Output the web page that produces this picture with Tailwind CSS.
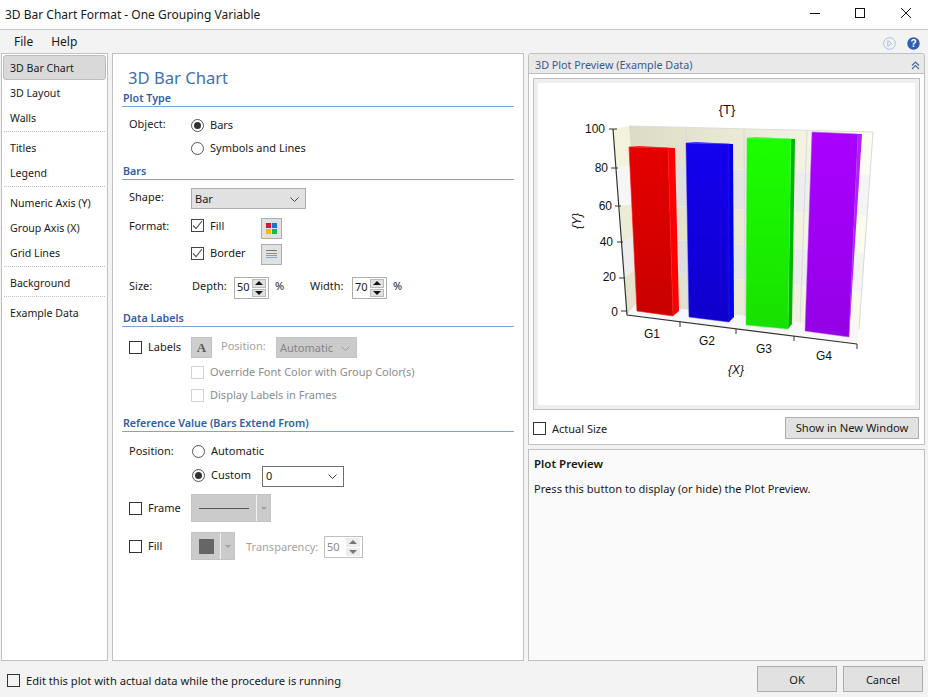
<!DOCTYPE html>
<html lang="en">
  <head>
    <meta charset="UTF-8" />
    <title>3D Bar Chart Format</title>
    <script src="https://cdn.jsdelivr.net/npm/@tailwindcss/browser@4"></script>
  </head>
  <body class="w-[930px] h-[697px] overflow-hidden bg-white font-['Noto_Sans',sans-serif] text-[11px] text-[#1a1a1a]">
    <div class="w-[928px] h-[697px] flex flex-col bg-[#f3f3f3]">
      <!-- title bar -->
      <div class="h-[30px] shrink-0 bg-white border-b border-[#c8c8c8] flex items-center pl-[5px] text-[12px]">
        <span class="flex-1">3D Bar Chart Format - One Grouping Variable</span>
        <svg class="w-[120px] h-[29px]" viewBox="808 0 120 29" fill="none" stroke="#111" stroke-width="1">
          <path d="M810 13.5h10" />
          <rect x="855.5" y="8.5" width="9" height="9" />
          <path d="M901 8l10 10M911 8l-10 10" />
        </svg>
      </div>

      <!-- menu -->
      <div class="h-[23px] shrink-0 flex items-center pl-[14px] pr-[8px] gap-[18px] text-[12px]">
        <span>File</span>
        <span>Help</span>
        <div class="flex-1"></div>
        <svg class="w-[13px] h-[13px] translate-y-[2px]" viewBox="0 0 13 13" fill="none" stroke="#a9c1e4" stroke-width="1">
          <circle cx="6.5" cy="6.5" r="5.8" />
          <path d="M4.8 3.6l4 2.9-4 2.9z" />
        </svg>
        <svg class="w-[13px] h-[13px] ml-[-7px] translate-y-[2px]" viewBox="0 0 13 13">
          <circle cx="6.5" cy="6.5" r="6.2" fill="#2f5fb0" />
          <text x="6.5" y="10" text-anchor="middle" font-size="10" font-weight="700" fill="#fff" font-family="Liberation Sans">?</text>
        </svg>
      </div>

      <div class="flex-1 flex pl-[1px] pr-[3px] gap-[4px] min-h-0">
        <!-- sidebar -->
        <div class="w-[107px] bg-white border border-[#c0c0c0] p-[1px] flex flex-col text-[10.6px]">
          <div class="h-[25px] shrink-0 flex items-center pl-[6px] pt-[2px] bg-[#d9d9d9] border border-[#bdbdbd] rounded-[3px]">3D Bar Chart</div>
          <div class="h-[25px] shrink-0 flex items-center pl-[7px] pt-[2px]">3D Layout</div>
          <div class="h-[25px] shrink-0 flex items-center pl-[7px] pt-[2px]">Walls</div>
          <div class="h-[5px] shrink-0 mx-[1px] border-t border-dotted border-[#c0c0c0] translate-y-[1px]"></div>
          <div class="h-[25px] shrink-0 flex items-center pl-[7px] pt-[2px]">Titles</div>
          <div class="h-[25px] shrink-0 flex items-center pl-[7px] pt-[2px]">Legend</div>
          <div class="h-[5px] shrink-0 mx-[1px] border-t border-dotted border-[#c0c0c0] translate-y-[1px]"></div>
          <div class="h-[25px] shrink-0 flex items-center pl-[7px] pt-[2px]">Numeric Axis (Y)</div>
          <div class="h-[25px] shrink-0 flex items-center pl-[7px] pt-[2px]">Group Axis (X)</div>
          <div class="h-[25px] shrink-0 flex items-center pl-[7px] pt-[2px]">Grid Lines</div>
          <div class="h-[5px] shrink-0 mx-[1px] border-t border-dotted border-[#c0c0c0] translate-y-[1px]"></div>
          <div class="h-[25px] shrink-0 flex items-center pl-[7px] pt-[2px]">Background</div>
          <div class="h-[5px] shrink-0 mx-[1px] border-t border-dotted border-[#c0c0c0] translate-y-[1px]"></div>
          <div class="h-[25px] shrink-0 flex items-center pl-[7px] pt-[2px]">Example Data</div>
        </div>

        <!-- form -->
        <div class="w-[412px] bg-white border border-[#c0c0c0] px-[9px] flex flex-col">
          <div class="h-[24px] mt-[12px] shrink-0 pl-[6px] flex items-center text-[16.6px] text-[#3f6fb5]">3D Bar Chart</div>

          <div class="h-[17px] shrink-0 pl-[1px] flex items-center border-b border-[#7ea3dc] font-semibold text-[10.7px] text-[#2f5ea8]">Plot Type</div>
          <div class="h-[24px] mt-[6px] shrink-0 pl-[7px] flex items-center">
            <span class="w-[62px] -translate-y-[1px]">Object:</span>
            <span class="w-[13px] h-[13px] rounded-full border border-[#555] flex items-center justify-center"><span class="w-[7px] h-[7px] rounded-full bg-[#333]"></span></span>
            <span class="ml-[6px]">Bars</span>
          </div>
          <div class="h-[22px] mb-[1px] shrink-0 pl-[69px] flex items-center">
            <span class="w-[13px] h-[13px] rounded-full border border-[#555]"></span>
            <span class="ml-[6px]">Symbols and Lines</span>
          </div>

          <div class="h-[17px] mt-[3px] shrink-0 pl-[1px] flex items-center border-b border-[#7ea3dc] font-semibold text-[10.7px] text-[#2f5ea8]">Bars</div>
          <div class="h-[21px] mt-[8px] shrink-0 pl-[7px] flex items-center">
            <span class="w-[62px] -translate-y-[1px]">Shape:</span>
            <div class="w-[115px] h-[21px] pt-[1px] bg-[#e1e1e1] border border-[#adadad] flex items-center pl-[3px] pr-[6px] justify-between">
              <span>Bar</span>
              <svg class="w-[9px] h-[5px]" viewBox="0 0 9 5" fill="none" stroke="#444"><path d="M.5.5l4 4 4-4" /></svg>
            </div>
          </div>
          <div class="h-[21px] mt-[9px] shrink-0 pl-[7px] flex items-start">
            <span class="w-[62px]">Format:</span>
            <span class="w-[13px] h-[13px] mt-[1px] border border-[#444] flex items-center justify-center">
              <svg class="w-[11px] h-[11px]" viewBox="0 0 11 11" fill="none" stroke="#555" stroke-width="1.1"><path d="M1 5.5l3 3.2 6-7.7" /></svg>
            </span>
            <span class="w-[51px] ml-[6px]">Fill</span>
            <span class="w-[21px] h-[21px] bg-[#e1e1e1] border border-[#adadad] flex items-center justify-center">
              <svg class="w-[11px] h-[11px]" viewBox="0 0 11 11">
                <rect width="5" height="5" fill="#e8101c" />
                <rect x="6" width="5" height="5" fill="#0f78d4" />
                <rect y="6" width="5" height="5" fill="#f6b80a" />
                <rect x="6" y="6" width="5" height="5" fill="#12b850" />
              </svg>
            </span>
          </div>
          <div class="h-[21px] mt-[5px] shrink-0 pl-[69px] flex items-start">
            <span class="w-[13px] h-[13px] mt-[3px] border border-[#444] flex items-center justify-center">
              <svg class="w-[11px] h-[11px]" viewBox="0 0 11 11" fill="none" stroke="#555" stroke-width="1.1"><path d="M1 5.5l3 3.2 6-7.7" /></svg>
            </span>
            <span class="w-[51px] ml-[6px] mt-[1px]">Border</span>
            <span class="w-[21px] h-[21px] bg-[#e1e1e1] border border-[#adadad] flex items-center justify-center">
              <svg class="w-[11px] h-[9px]" viewBox="0 0 11 9">
                <rect width="11" height="1" fill="#777" />
                <rect y="3" width="11" height="1" fill="#7f9f7f" />
                <rect y="5" width="11" height="1" fill="#d88080" />
                <rect y="7" width="11" height="1" fill="#80a8d8" />
              </svg>
            </span>
          </div>
          <div class="h-[22px] mt-[12px] shrink-0 pl-[7px] flex items-center">
            <span class="w-[63px] -translate-y-[2px]">Size:</span>
            <span class="w-[42px] -translate-y-[2px]">Depth:</span>
            <div class="w-[35px] h-[22px] border border-[#adadad] flex items-center pl-[2px] bg-white">
              <span class="flex-1 -translate-y-[1px]">50</span>
              <span class="w-[14px] h-[18px] mr-[2px] flex flex-col gap-[1px]">
                <span class="flex-1 bg-[#e1e1e1] border border-[#bbb] flex items-center justify-center"><span class="w-0 h-0 border-x-[4px] border-x-transparent border-b-[4px] border-b-[#111]"></span></span>
                <span class="flex-1 bg-[#e1e1e1] border border-[#bbb] flex items-center justify-center"><span class="w-0 h-0 border-x-[4px] border-x-transparent border-t-[4px] border-t-[#111]"></span></span>
              </span>
            </div>
            <span class="w-[35px] ml-[6px] -translate-y-[2px]">%</span>
            <span class="w-[42px] -translate-y-[2px]">Width:</span>
            <div class="w-[35px] h-[22px] border border-[#adadad] flex items-center pl-[2px] bg-white">
              <span class="flex-1 -translate-y-[1px]">70</span>
              <span class="w-[14px] h-[18px] mr-[2px] flex flex-col gap-[1px]">
                <span class="flex-1 bg-[#e1e1e1] border border-[#bbb] flex items-center justify-center"><span class="w-0 h-0 border-x-[4px] border-x-transparent border-b-[4px] border-b-[#111]"></span></span>
                <span class="flex-1 bg-[#e1e1e1] border border-[#bbb] flex items-center justify-center"><span class="w-0 h-0 border-x-[4px] border-x-transparent border-t-[4px] border-t-[#111]"></span></span>
              </span>
            </div>
            <span class="ml-[6px] -translate-y-[2px]">%</span>
          </div>

          <div class="h-[17px] mt-[11px] shrink-0 pl-[1px] flex items-center border-b border-[#7ea3dc] font-semibold text-[10.7px] text-[#2f5ea8]">Data Labels</div>
          <div class="h-[21px] mt-[10px] shrink-0 pl-[7px] flex items-center">
            <span class="w-[13px] h-[13px] border border-[#333]"></span>
            <span class="w-[43px] ml-[6px]">Labels</span>
            <span class="w-[21px] h-[21px] bg-[#cfcfcf] border border-[#c2c2c2] flex items-center justify-center font-['Liberation_Serif',serif] font-bold text-[13px] text-[#5c5c5c]">A</span>
            <span class="w-[55px] ml-[9px] -translate-y-[1px] text-[#a3a3a3]">Position:</span>
            <div class="w-[81px] h-[21px] pt-[1px] bg-[#cbcbcb] border border-[#c4c4c4] flex items-center pl-[3px] pr-[6px] justify-between text-[#858585]">
              <span>Automatic</span>
              <svg class="w-[9px] h-[5px]" viewBox="0 0 9 5" fill="none" stroke="#a0a0a0"><path d="M.5.5l4 4 4-4" /></svg>
            </div>
          </div>
          <div class="h-[22px] mt-[3px] mb-[1px] shrink-0 pl-[69px] flex items-center text-[#8c8c8c]">
            <span class="w-[13px] h-[13px] border border-[#d2d2d2]"></span>
            <span class="ml-[6px]">Override Font Color with Group Color(s)</span>
          </div>
          <div class="h-[22px] mb-[1px] shrink-0 pl-[69px] flex items-center text-[#8c8c8c]">
            <span class="w-[13px] h-[13px] border border-[#d2d2d2]"></span>
            <span class="ml-[6px]">Display Labels in Frames</span>
          </div>

          <div class="h-[17px] mt-[8px] shrink-0 pl-[1px] flex items-center border-b border-[#7ea3dc] font-semibold text-[10.7px] text-[#2f5ea8]">Reference Value (Bars Extend From)</div>
          <div class="h-[24px] mt-[7px] shrink-0 pl-[7px] flex items-center">
            <span class="w-[63px]">Position:</span>
            <span class="w-[13px] h-[13px] rounded-full border border-[#555]"></span>
            <span class="ml-[6px]">Automatic</span>
          </div>
          <div class="h-[22px] mt-[2px] shrink-0 pl-[70px] flex items-center">
            <span class="w-[13px] h-[13px] rounded-full border border-[#555] flex items-center justify-center -translate-y-[1px]"><span class="w-[7px] h-[7px] rounded-full bg-[#333]"></span></span>
            <span class="w-[51px] ml-[6px] -translate-y-[1px]">Custom</span>
            <div class="w-[82px] h-[21px] bg-white border border-[#6e6e6e] flex items-center pl-[3px] pr-[6px] justify-between">
              <span>0</span>
              <svg class="w-[9px] h-[5px]" viewBox="0 0 9 5" fill="none" stroke="#444"><path d="M.5.5l4 4 4-4" /></svg>
            </div>
          </div>
          <div class="h-[28px] mt-[7px] shrink-0 pl-[7px] flex items-center">
            <span class="w-[13px] h-[13px] border border-[#333]"></span>
            <span class="w-[43px] ml-[6px]">Frame</span>
            <div class="w-[80px] h-[28px] bg-[#cbcbcb] border border-[#c4c4c4] flex items-center">
              <span class="w-[65px] h-full border-r border-[#f2f2f2] flex items-center justify-center"><span class="w-[50px] h-px bg-[#555]"></span></span>
              <span class="flex-1 flex justify-center"><span class="w-0 h-0 border-x-[3px] border-x-transparent border-t-[3px] border-t-[#a0a0a0]"></span></span>
            </div>
          </div>
          <div class="h-[28px] mt-[10px] shrink-0 pl-[7px] flex items-center">
            <span class="w-[13px] h-[13px] border border-[#333]"></span>
            <span class="w-[43px] ml-[6px]">Fill</span>
            <div class="w-[44px] h-[28px] bg-[#cbcbcb] border border-[#c4c4c4] flex items-center">
              <span class="w-[29px] h-full border-r border-[#f2f2f2] flex items-center justify-center"><span class="w-[15px] h-[15px] bg-[#666]"></span></span>
              <span class="flex-1 flex justify-center"><span class="w-0 h-0 border-x-[3px] border-x-transparent border-t-[3px] border-t-[#a0a0a0]"></span></span>
            </div>
            <span class="w-[78px] ml-[11px] translate-y-[1px] text-[#a3a3a3]">Transparency:</span>
            <div class="w-[39px] h-[22px] mt-[2px] border border-[#c0c0c0] flex items-center pl-[2px] text-[#888]">
              <span class="flex-1">50</span>
              <span class="w-[14px] h-[18px] mr-[2px] flex flex-col gap-[1px]">
                <span class="flex-1 bg-[#ededed] flex items-center justify-center"><span class="w-0 h-0 border-x-[4px] border-x-transparent border-b-[4px] border-b-[#777]"></span></span>
                <span class="flex-1 bg-[#ededed] flex items-center justify-center"><span class="w-0 h-0 border-x-[4px] border-x-transparent border-t-[4px] border-t-[#777]"></span></span>
              </span>
            </div>
          </div>
        </div>

        <!-- preview column -->
        <div class="w-[397px] flex flex-col gap-[4px]">
          <div class="h-[392px] shrink-0 bg-white border border-[#c0c0c0] rounded-t-[3px] flex flex-col">
            <div class="h-[20px] shrink-0 pt-[3px] bg-[#e9e9e9] border-b border-[#c0c0c0] rounded-t-[3px] flex items-center justify-between pl-[6px] pr-[4px] text-[10.75px] text-[#3b5a8a]">
              <span>3D Plot Preview (Example Data)</span>
              <svg class="w-[9px] h-[9px]" viewBox="0 0 9 9" fill="none" stroke="#4a6a9c" stroke-width="1.2"><path d="M1 4.5l3.5-3.5 3.5 3.5M1 8l3.5-3.5L8 8" /></svg>
            </div>
            <div class="w-[387px] h-[332px] mt-[4px] ml-[4px] shrink-0 bg-[#efefef] border border-[#c0c0c0] p-[4px]">
              <div class="w-[377px] h-[322px] bg-white">
                <!-- plot drawn in window coordinates -->
                <svg class="w-[377px] h-[322px]" viewBox="538 84 377 322" font-family="Liberation Sans, sans-serif" font-size="12" fill="#111">
                  <defs>
                    <linearGradient id="red" x1="0" y1="0" x2="0" y2="1"><stop offset="0" stop-color="#e60000" /><stop offset="1" stop-color="#c80000" /></linearGradient>
                    <linearGradient id="blue" x1="0" y1="0" x2="0" y2="1"><stop offset="0" stop-color="#1400ee" /><stop offset="1" stop-color="#1000cc" /></linearGradient>
                    <linearGradient id="green" x1="0" y1="0" x2="0" y2="1"><stop offset="0" stop-color="#1cff00" /><stop offset="1" stop-color="#18e000" /></linearGradient>
                    <linearGradient id="purple" x1="0" y1="0" x2="0" y2="1"><stop offset="0" stop-color="#aa00ff" /><stop offset="1" stop-color="#9400e6" /></linearGradient>
                    <linearGradient id="wallY" gradientUnits="userSpaceOnUse" x1="629" y1="0" x2="873" y2="0"><stop offset="0" stop-color="#dcdbc5" /><stop offset=".5" stop-color="#ecebd8" /><stop offset="1" stop-color="#fdfdf0" /></linearGradient>
                    <linearGradient id="wallG" gradientUnits="userSpaceOnUse" x1="629" y1="0" x2="873" y2="0"><stop offset="0" stop-color="#d8d8d8" /><stop offset=".5" stop-color="#e6e6e6" /><stop offset="1" stop-color="#f6f6f6" /></linearGradient>
                  </defs>
                  <!-- left wall -->
                  <polygon points="613,130 629,127 632,166 617,169" fill="#f3f2dc" />
                  <polygon points="617,169 632,166 633,205 620,207" fill="#f6f6f6" />
                  <polygon points="620,207 633,205 634,238 622,243" fill="#ecebd6" />
                  <polygon points="622,243 634,238 636,270 624,279" fill="#ededed" />
                  <polygon points="624,279 636,270 636,305 627,316" fill="#e4e3cc" />
                  <!-- back wall -->
                  <polygon points="629,127 873,133 869,176 632,166" fill="url(#wallY)" />
                  <polygon points="632,166 869,176 868,217 633,205" fill="url(#wallG)" />
                  <polygon points="633,205 868,217 865,255 634,238" fill="url(#wallY)" />
                  <polygon points="634,238 865,255 862,293 636,270" fill="url(#wallG)" />
                  <polygon points="636,270 862,293 859,330 636,305" fill="url(#wallY)" />
                  <path d="M686 129L688 312M744 131L745 320M807 132L800 327M873 133L859 330" stroke="#d9d9d9" fill="none" />
                  <path d="M629 127L873 133" stroke="#dcdcdc" fill="none" />
                  <!-- floor -->
                  <polygon points="636,305 859,330 857,345 627,316" fill="#f7f7f7" />
                  <!-- bars -->
                  <polygon points="629,148 639,147 675,149 668,149" fill="#ff2020" />
                  <polygon points="668,149 675,149 679,312 673,317" fill="#ff0000" />
                  <polygon points="629,148 668,149 673,317 637,312" fill="url(#red)" stroke="#ff1c1c" stroke-width=".7" />
                  <polygon points="686,144 696,143 733,145 729,145" fill="#3030ff" />
                  <polygon points="729,145 733,145 734,318 729,323" fill="#0000e6" />
                  <polygon points="686,144 729,145 729,323 689,318" fill="url(#blue)" stroke="#2a2aff" stroke-width=".5" />
                  <polygon points="747,139 756,138 795,140 791,140" fill="#40ff30" />
                  <polygon points="791,140 795,140 792,325 788,330" fill="#00b400" />
                  <polygon points="747,139 791,140 788,330 746,326" fill="url(#green)" stroke="#30ff30" stroke-width=".5" />
                  <polygon points="812,133 858,135 849,338 805,332" fill="url(#purple)" stroke="#b850ff" stroke-width=".5" />
                  <polygon points="858,135 862,135 849,338" fill="#b020ff" />
                  <!-- axes -->
                  <path d="M613 130L627 316L857 345" stroke="#333" stroke-width="1.2" fill="none" />
                  <path d="M609 130h8M611 169h7M615 207h6M617 243h6M619 279h6M621 312h6" stroke="#333" fill="none" />
                  <path d="M680 323v5M736 330v5M794 337v5M857 345v5" stroke="#333" fill="none" />
                  <g text-anchor="end">
                    <text x="605" y="134">100</text>
                    <text x="608" y="173">80</text>
                    <text x="612" y="211">60</text>
                    <text x="613" y="247">40</text>
                    <text x="616" y="282">20</text>
                    <text x="618" y="317">0</text>
                  </g>
                  <g text-anchor="middle">
                    <text x="727" y="115" font-size="13">{T}</text>
                    <text x="652" y="339">G1</text>
                    <text x="707" y="346">G2</text>
                    <text x="764" y="354">G3</text>
                    <text x="824" y="361">G4</text>
                    <text x="736" y="375" font-style="italic">{X}</text>
                    <text transform="translate(581 222) rotate(-90)" font-style="italic">{Y}</text>
                  </g>
                </svg>
              </div>
            </div>
            <div class="h-[22px] mt-[7px] shrink-0 pl-[4px] pr-[5px] flex items-center justify-between">
              <span class="flex items-center"><span class="w-[13px] h-[13px] border border-[#333]"></span><span class="ml-[6px] translate-y-[1px]">Actual Size</span></span>
              <span class="w-[134px] h-[22px] pt-[1px] bg-[#e1e1e1] border border-[#adadad] flex items-center justify-center text-[11.2px]">Show in New Window</span>
            </div>
          </div>
          <div class="flex-1 bg-[#fafafa] border border-[#c0c0c0] pl-[5px] pt-[5px]">
            <p class="font-semibold text-[11.5px] h-[26px]">Plot Preview</p>
            <p class="text-[11.1px]">Press this button to display (or hide) the Plot Preview.</p>
          </div>
        </div>
      </div>

      <!-- bottom bar -->
      <div class="h-[36px] shrink-0 flex items-center pl-[7px] pr-[5px]">
        <span class="w-[13px] h-[13px] border border-[#333] translate-y-[1px]"></span>
        <span class="ml-[6px] flex-1 translate-y-[2px] text-[11.15px]">Edit this plot with actual data while the procedure is running</span>
        <span class="w-[80px] h-[26px] pt-[2px] bg-[#e1e1e1] border border-[#adadad] flex items-center justify-center">OK</span>
        <span class="w-[80px] h-[26px] pt-[2px] ml-[6px] bg-[#e1e1e1] border border-[#adadad] flex items-center justify-center">Cancel</span>
      </div>
    </div>
  </body>
</html>
